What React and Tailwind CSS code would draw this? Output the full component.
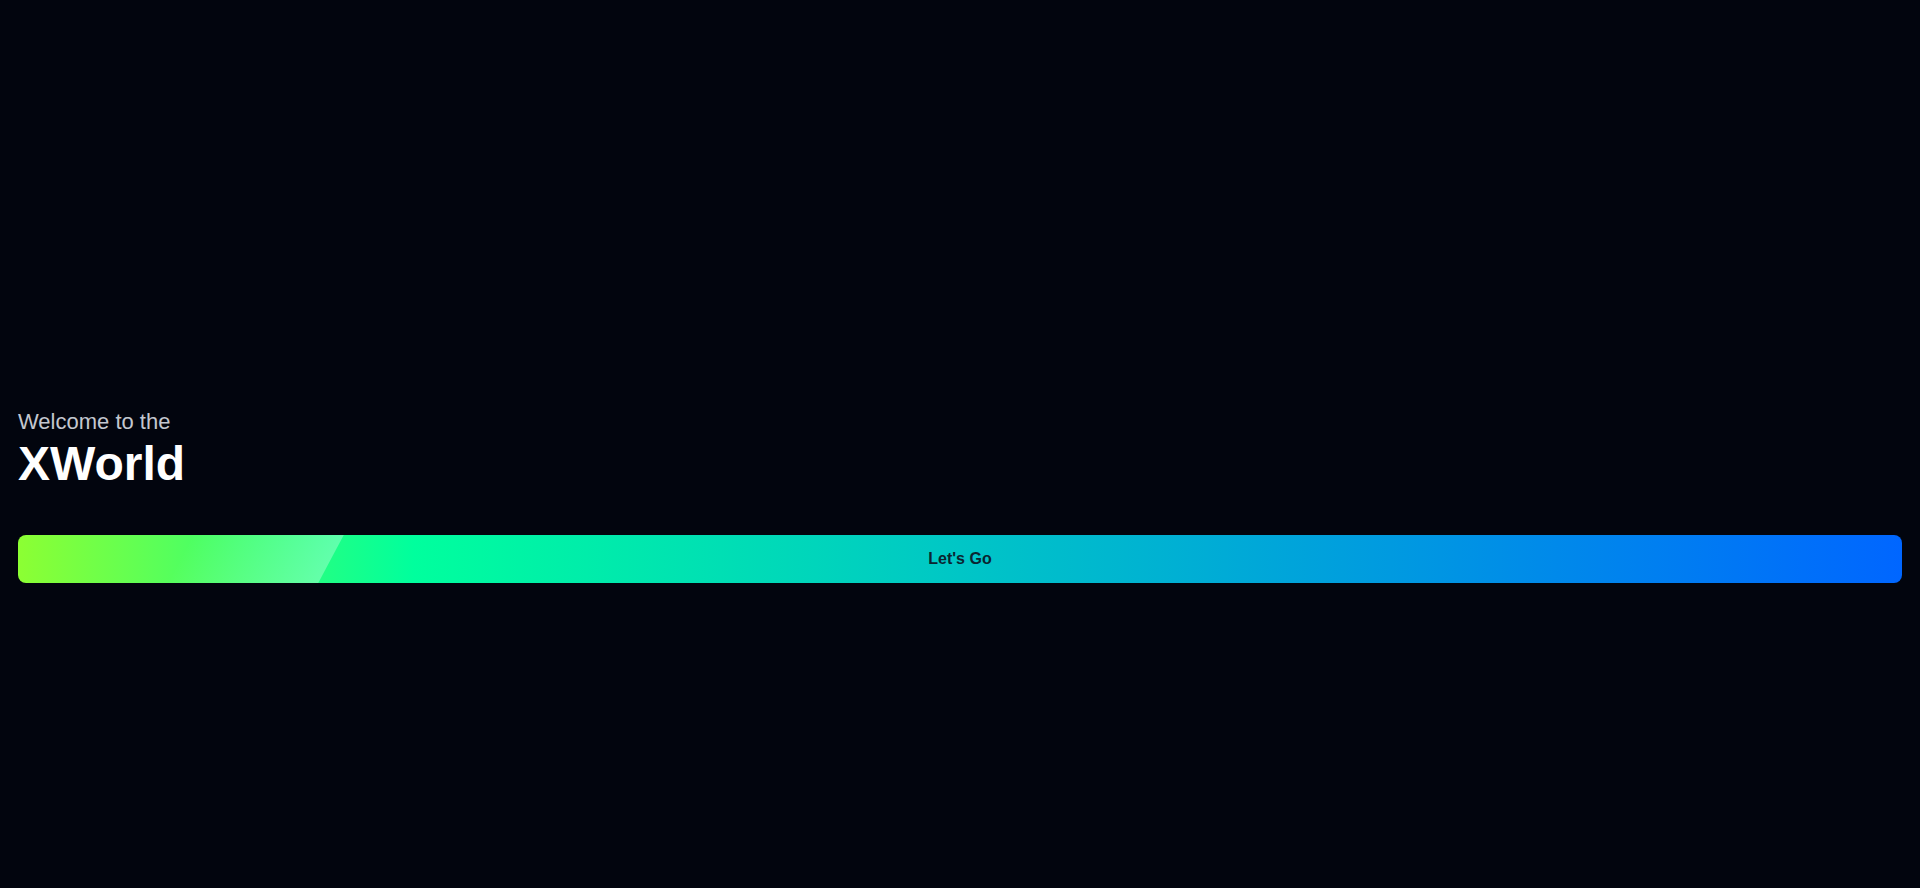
export default function App() {
  return (
    <div className="min-h-screen w-full bg-[#02050e] font-['Liberation_Sans',Arial,sans-serif]">
      <div className="px-[18px] pt-[405px]">
        <p className="text-[22px] leading-[33px] text-[#c3c7cf]">Welcome to the</p>
        <h1 className="mt-[2px] text-5xl font-bold leading-none text-white">XWorld</h1>

        <button
          type="button"
          className="relative mt-[47px] flex h-12 w-full items-center justify-center overflow-hidden rounded-lg bg-[linear-gradient(90deg,#8cff33_0%,#00ff9d_21%,#00c6c6_50%,#0066ff_100%)]"
        >
          {/* shine */}
          <span className="pointer-events-none absolute inset-y-0 left-[162px] w-[151px] -skew-x-[28deg] bg-[linear-gradient(90deg,rgba(255,255,255,0)_0%,rgba(255,255,255,0.3)_100%)]" />
          <span className="relative text-base font-bold text-[#0b2530]">Let's Go</span>
        </button>
      </div>
    </div>
  );
}
